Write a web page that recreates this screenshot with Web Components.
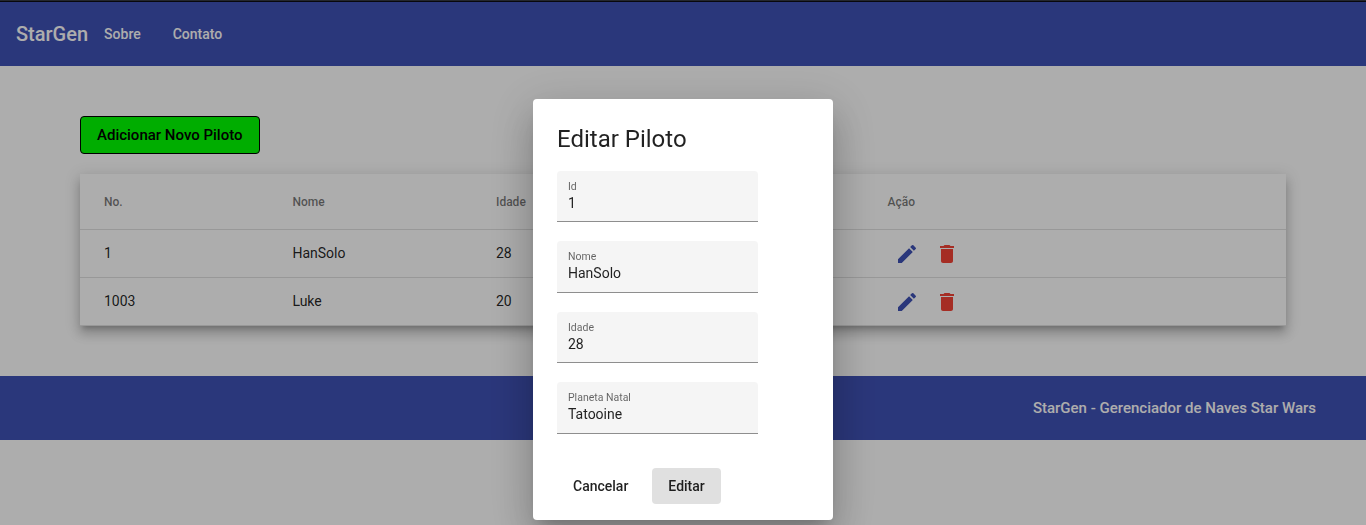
<!DOCTYPE html>
<html lang="pt-BR">
<head>
<meta charset="utf-8">
<title>StarGen</title>
<style>
html, body { margin: 0; height: 100%; overflow: hidden; }
body { background: #fff; font: 400 14px/20px Roboto, "Helvetica Neue", sans-serif; color: rgba(0,0,0,.87); }
</style>
</head>
<body>
<star-app></star-app>
<script>
const define = (name, html) => {
  const t = document.createElement('template');
  t.innerHTML = html;
  customElements.define(name, class extends HTMLElement {
    constructor() {
      super();
      this.attachShadow({ mode: 'open' }).append(t.content.cloneNode(true));
    }
    connectedCallback() {
      this.shadowRoot.querySelectorAll('[data-attr]').forEach(el => {
        el.textContent = this.getAttribute(el.dataset.attr) || '';
      });
    }
  });
};

define('star-toolbar', `
<style>
:host { display: flex; align-items: center; box-sizing: border-box; height: 66px; padding: 2px 16px 0; background: linear-gradient(#363a45 1px, #0c0d14 1px 2px, #3f51b5 2px); color: #fff; font-weight: 500; }
.brand { font-size: 20px; line-height: 32px; }
nav { display: flex; }
::slotted(a) { padding: 0 16px; line-height: 36px; color: #fff; text-decoration: none; }
</style>
<span class="brand" data-attr="brand"></span><nav><slot></slot></nav>`);

define('star-button', `
<style>
:host { display: inline-block; box-sizing: border-box; padding: 0 16px; border-radius: 4px; line-height: 36px; font-weight: 500; white-space: nowrap; background: var(--bg, transparent); border: var(--line, 0); }
</style><slot></slot>`);

define('star-icon-edit', `
<style>:host { display: block; width: 24px; height: 24px; } svg { display: block; }</style>
<svg width="24" height="24" viewBox="0 0 24 24" fill="#3f51b5"><path d="M3 17.25V21h3.75L17.81 9.94l-3.75-3.75L3 17.25zM20.71 7.04a1 1 0 0 0 0-1.41l-2.34-2.34a1 1 0 0 0-1.41 0l-1.83 1.83 3.75 3.75 1.83-1.83z"/></svg>`);

define('star-icon-delete', `
<style>:host { display: block; width: 24px; height: 24px; } svg { display: block; }</style>
<svg width="24" height="24" viewBox="0 0 24 24" fill="#f44336"><path d="M6 19c0 1.1.9 2 2 2h8c1.1 0 2-.9 2-2V7H6v12zM19 4h-3.5l-1-1h-5l-1 1H5v2h14V4z"/></svg>`);

define('star-row', `
<style>
:host { display: grid; grid-template-columns: 188.4px 203.6px 391.5px 1fr; align-items: center; box-sizing: border-box; height: 48px; padding: 0 24px 2px; border-bottom: 1px solid rgba(0,0,0,.12); }
:host([head]) { height: 56px; padding-bottom: 0; font-size: 12px; font-weight: 500; color: rgba(0,0,0,.54); }
</style><slot></slot>`);

define('star-actions', `
<style>:host { display: flex; gap: 16px; padding: 2px 0 0 8px; } svg { overflow: visible; }</style>
<star-icon-edit></star-icon-edit><star-icon-delete></star-icon-delete>`);

define('star-table', `
<style>
:host { display: block; background: #fff; box-shadow: 0 5px 5px -3px rgba(0,0,0,.2), 0 8px 10px 1px rgba(0,0,0,.14), 0 3px 14px 2px rgba(0,0,0,.12); }
</style><slot></slot>`);

define('star-footer', `
<style>
:host { display: flex; align-items: center; justify-content: flex-end; height: 64px; padding: 0 50px; background: #3f51b5; color: #fff; font-size: 15px; font-weight: 500; }
</style><slot></slot>`);

define('star-field', `
<style>
:host { display: block; height: 70.4px; }
.box { box-sizing: border-box; width: 201px; height: 51.4px; padding: 9px 11px 0; background: #f5f5f5; border-bottom: 1px solid #8e8e8e; border-radius: 4px 4px 0 0; }
.label { font-size: 10.5px; line-height: 14px; color: rgba(0,0,0,.6); }
.value { line-height: 18px; }
</style>
<div class="box"><div class="label" data-attr="label"></div><div class="value" data-attr="value"></div></div>`);

define('star-dialog', `
<style>
:host { position: fixed; inset: 0; background: rgba(0,0,0,.32); }
.panel { box-sizing: border-box; width: 300px; height: 421px; margin: 99px 0 0 533px; padding: 24px; background: #fff; border-radius: 4px; box-shadow: 0 11px 15px -7px rgba(0,0,0,.2), 0 24px 38px 3px rgba(0,0,0,.14), 0 9px 46px 8px rgba(0,0,0,.12); }
h1 { margin: 0 0 16px; font-size: 24px; line-height: 32px; font-weight: 400; }
.actions { display: flex; gap: 8px; margin-top: 15.4px; }
</style>
<div class="panel"><h1 data-attr="heading"></h1><slot></slot><div class="actions"><slot name="action"></slot></div></div>`);

define('star-app', `
<style>
:host { display: block; }
main { padding: 50px 80px; }
.add { --bg: #0f0; --line: 1px solid #000; font-size: 15px; color: #000; display: block; width: 180px; margin-bottom: 20px; }
.on { --bg: #e0e0e0; }
</style>
<star-toolbar brand="StarGen"><a>Sobre</a><a>Contato</a></star-toolbar>
<main>
  <star-button class="add">Adicionar Novo Piloto</star-button>
  <star-table>
    <star-row head><span>No.</span><span>Nome</span><span>Idade</span><span>Ação</span></star-row>
    <star-row><span>1</span><span>HanSolo</span><span>28</span><star-actions></star-actions></star-row>
    <star-row><span>1003</span><span>Luke</span><span>20</span><star-actions></star-actions></star-row>
  </star-table>
</main>
<star-footer>StarGen - Gerenciador de Naves Star Wars</star-footer>
<star-dialog heading="Editar Piloto">
  <star-field label="Id" value="1"></star-field>
  <star-field label="Nome" value="HanSolo"></star-field>
  <star-field label="Idade" value="28"></star-field>
  <star-field label="Planeta Natal" value="Tatooine"></star-field>
  <star-button slot="action">Cancelar</star-button>
  <star-button slot="action" class="on">Editar</star-button>
</star-dialog>`);
</script>
</body>
</html>
